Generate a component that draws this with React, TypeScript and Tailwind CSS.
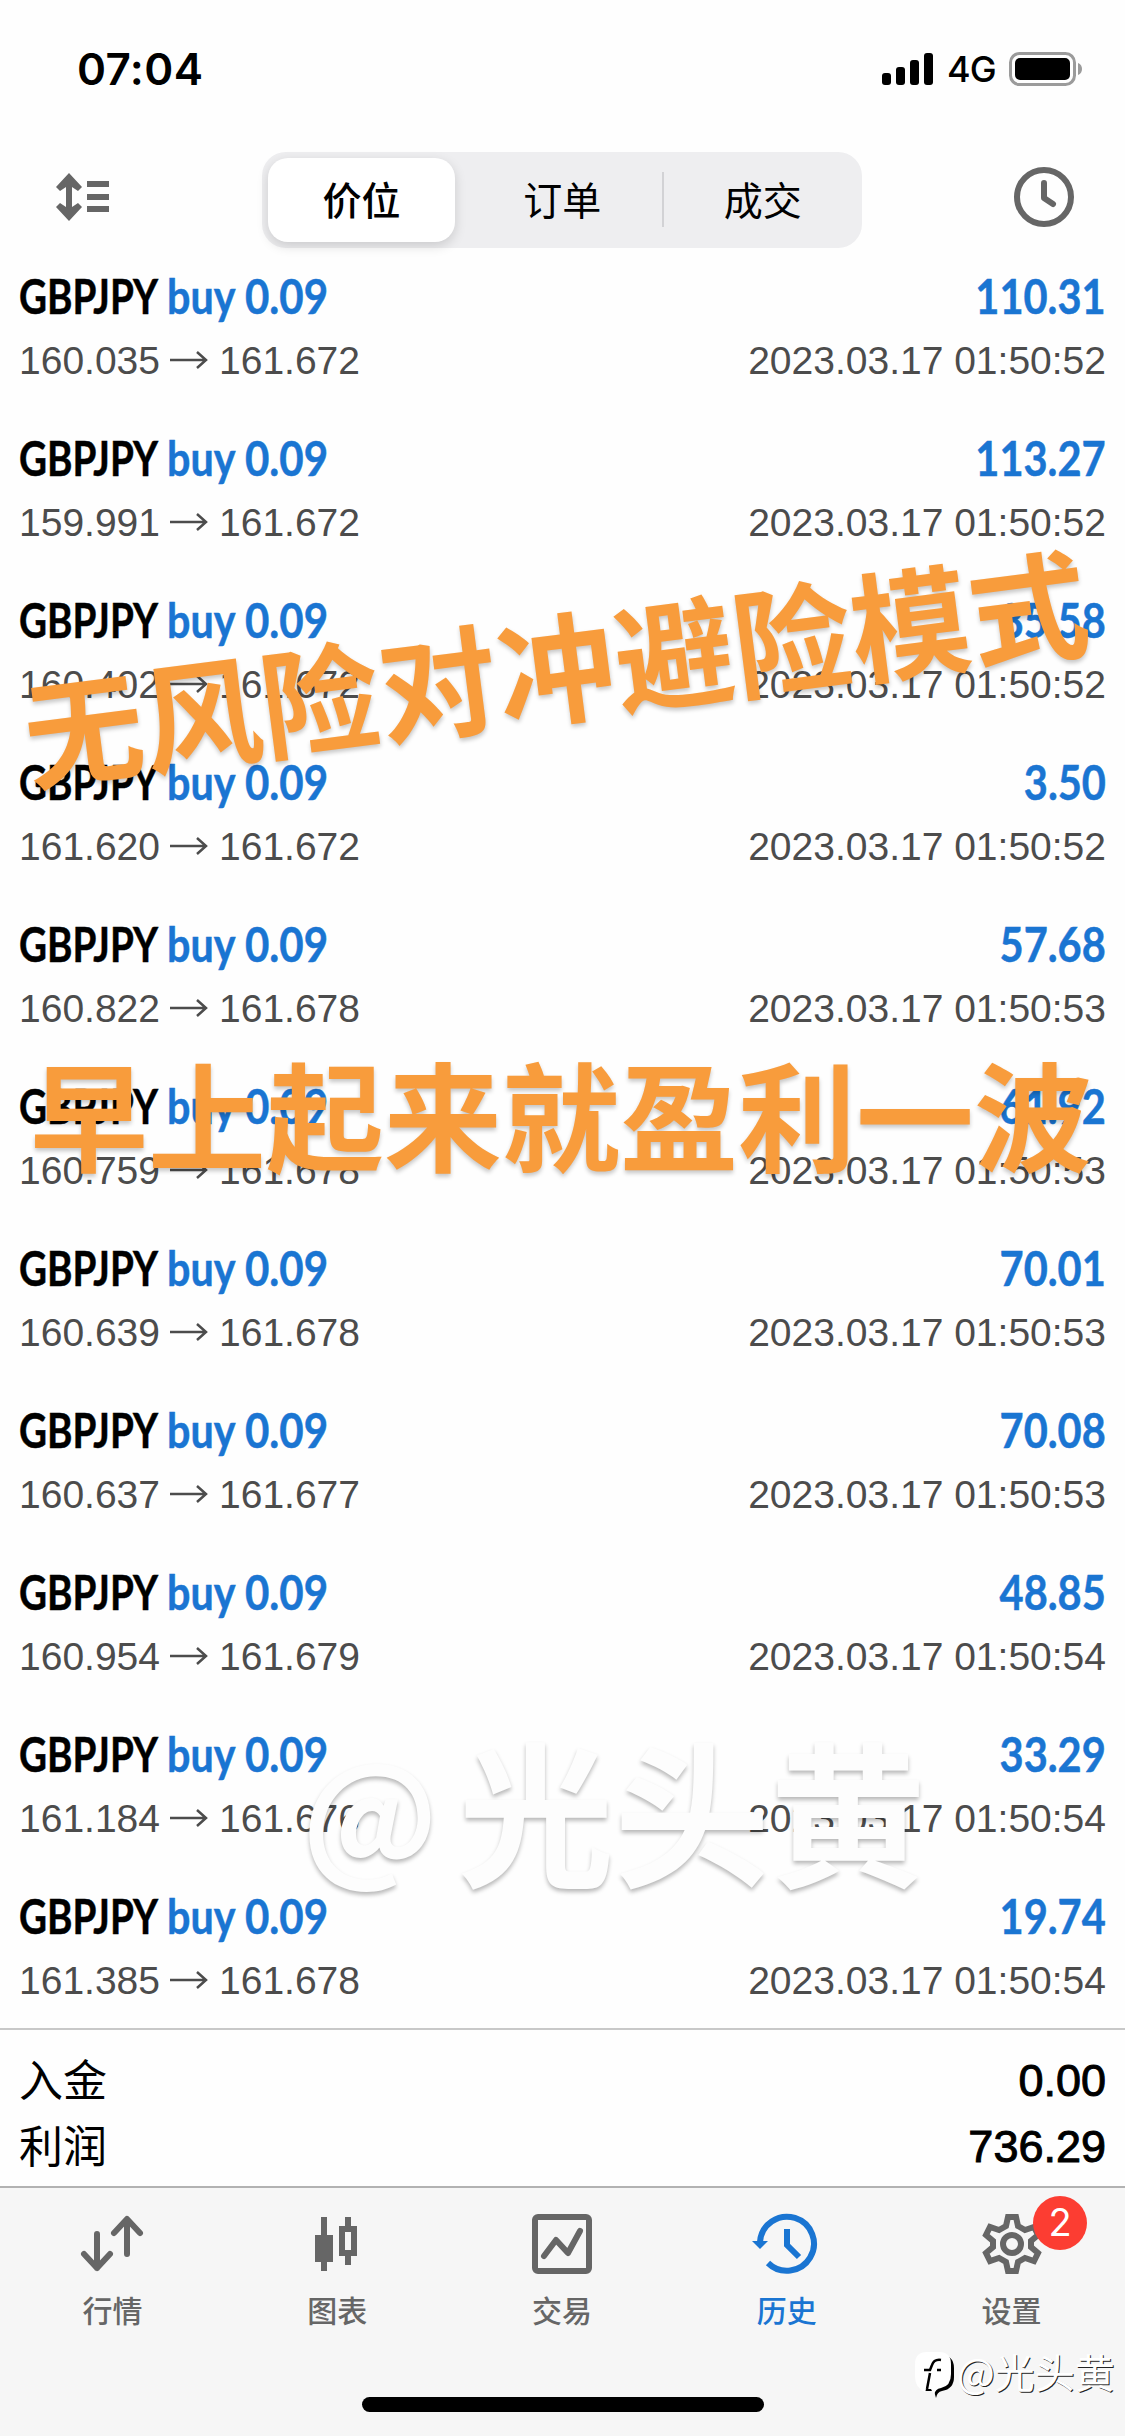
import type { ReactNode } from 'react';

const deals = [
  { from: '160.035', to: '161.672', profit: '110.31', time: '2023.03.17 01:50:52' },
  { from: '159.991', to: '161.672', profit: '113.27', time: '2023.03.17 01:50:52' },
  { from: '160.402', to: '161.672', profit: '85.58', time: '2023.03.17 01:50:52' },
  { from: '161.620', to: '161.672', profit: '3.50', time: '2023.03.17 01:50:52' },
  { from: '160.822', to: '161.678', profit: '57.68', time: '2023.03.17 01:50:53' },
  { from: '160.759', to: '161.678', profit: '61.92', time: '2023.03.17 01:50:53' },
  { from: '160.639', to: '161.678', profit: '70.01', time: '2023.03.17 01:50:53' },
  { from: '160.637', to: '161.677', profit: '70.08', time: '2023.03.17 01:50:53' },
  { from: '160.954', to: '161.679', profit: '48.85', time: '2023.03.17 01:50:54' },
  { from: '161.184', to: '161.676', profit: '33.29', time: '2023.03.17 01:50:54' },
  { from: '161.385', to: '161.678', profit: '19.74', time: '2023.03.17 01:50:54' },
];

function StatusBar() {
  return (
    <div className="flex h-[138px] items-center justify-between pl-[77px] pr-[42px]">
      <span className="font-[Inter,sans-serif] text-[44px] font-semibold leading-none tracking-[0.4px]">07:04</span>
      <div className="flex items-center">
        <svg width="52" height="34" viewBox="0 0 52 34">
          <rect x="0" y="21" width="9" height="12" rx="3" />
          <rect x="14" y="15" width="9" height="18" rx="3" />
          <rect x="28" y="8" width="9" height="25" rx="3" />
          <rect x="42" y="1" width="9" height="32" rx="3" />
        </svg>
        <span className="ml-[13px] w-[62px] font-[Inter,sans-serif] text-[36px] font-medium leading-none tracking-[-1px]">4G</span>
        <svg width="74" height="36" viewBox="0 0 74 36">
          <rect x="1.5" y="2.5" width="64" height="31" rx="9" fill="none" stroke="#9b9b9b" strokeWidth="3" />
          <rect x="6" y="7" width="55" height="22" rx="5" />
          <path d="M69 12c3 1 4 3.500 4 6s-1 5-4 6z" fill="#9b9b9b" />
        </svg>
      </div>
    </div>
  );
}

function Toolbar() {
  return (
    <div className="flex h-[123px] items-center justify-between pl-[54px] pr-[49px]">
      <svg width="56" height="50" viewBox="0 0 56 50" className="-mt-[5px]" stroke="#666" strokeWidth="6">
        <path d="M15 7v36" />
        <path d="M15 1 28 15l-4 4-9-6-9 6-4-4zM15 49 28 35l-4-4-9 6-9-6-4 4z" fill="#666" stroke="none" />
        <path d="M33 12h22M33 25h22M33 37h22" />
      </svg>
      <div className="ml-[2px] flex h-24 w-[600px] items-center rounded-[24px] bg-[#eeeef0] p-[6px] pr-0 font-['Noto_Sans_CJK_SC',sans-serif] text-[39px] leading-[54px]">
        <div className="mr-[8px] flex h-[84px] w-[187px] items-center justify-center rounded-[20px] bg-white pb-[4px] font-medium shadow-[0_4px_12px_rgba(0,0,0,0.15)]">
          价位
        </div>
        <div className="flex flex-1 justify-center pb-[4px]">订单</div>
        <div className="h-[55px] w-[2px] bg-[#d2d2d5]" />
        <div className="flex flex-1 justify-center pb-[4px]">成交</div>
      </div>
      <svg width="64" height="64" viewBox="0 0 64 64" className="-mt-[5px]" fill="none" stroke="#666" strokeWidth="6">
        <circle cx="32" cy="32" r="27" />
        <path d="M32 18v15l9 6" strokeLinecap="round" strokeLinejoin="round" />
      </svg>
    </div>
  );
}

function DealRow({ deal }: { deal: (typeof deals)[number] }) {
  return (
    <div className="h-[162px] px-[19px] pt-[9px]">
      <div className="flex h-[52px] items-center whitespace-nowrap font-[Lato,sans-serif] text-[48px] font-bold leading-none [-webkit-text-stroke:0.5px_currentColor]">
        <span className="w-[148px]">
          <span className="inline-block origin-left scale-x-[0.805]">GBPJPY</span>
        </span>
        <span className="w-[78px] text-[#1a75d2]">
          <span className="inline-block origin-left scale-x-[0.86]">buy</span>
        </span>
        <span className="text-[#1a75d2]">
          <span className="inline-block origin-left scale-x-[0.875]">0.09</span>
        </span>
        <span className="ml-auto text-[#1a75d2]">
          <span className="inline-block origin-right scale-x-[0.865]">{deal.profit}</span>
        </span>
      </div>
      <div className="mt-[13px] flex h-[50px] items-center whitespace-nowrap font-['Liberation_Sans',sans-serif] text-[39px] leading-none text-[#4c4c4c]">
        <span className="w-[141px]">{deal.from}</span>
        <svg width="40" height="20" viewBox="0 0 40 20" className="ml-[9px] mr-[10px]" fill="none" stroke="#4c4c4c" strokeWidth="2.500">
          <path d="M1 10h36M28 2l9 8-9 8" />
        </svg>
        <span>{deal.to}</span>
        <span className="ml-auto">{deal.time}</span>
      </div>
    </div>
  );
}

function SummaryRow({ label, value }: { label: string; value: string }) {
  return (
    <div className="flex h-[66px] items-center justify-between">
      <span className="pb-[5px] font-['Noto_Sans_CJK_SC',sans-serif] text-[44px] leading-none">{label}</span>
      <span className="font-['Liberation_Sans',sans-serif] text-[45px] leading-none [-webkit-text-stroke:1px_black]">{value}</span>
    </div>
  );
}

function Tab({ label, active, children }: { label: string; active?: boolean; children: ReactNode }) {
  return (
    <div className={active ? 'flex flex-col items-center text-[#1a75d2]' : 'flex flex-col items-center text-[#666]'}>
      <svg width="80" height="68" viewBox="-40 -34 80 68" fill="none" stroke="currentColor" strokeWidth="6">
        {children}
      </svg>
      <span className="mt-[11px] font-['Noto_Sans_CJK_SC',sans-serif] text-[30px] font-medium leading-[40px]">{label}</span>
    </div>
  );
}

function TabBar() {
  return (
    <div className="h-[250px] border-t-2 border-[#b2b2b2] bg-[#f6f6f6]">
      <div className="grid w-[1124px] grid-cols-5 pt-[22px]">
        <Tab label="行情">
          <path d="M-15-10v34M-28 10l13 14L-2 10M15 10v-34M2-11l13-14 13 14" strokeLinecap="round" strokeLinejoin="round" />
        </Tab>
        <Tab label="图表">
          <g fill="currentColor" stroke="none">
            <path d="M-16-27h6v54h-6zM-22-9h18v27h-18z" />
            <path d="M8-27h6v9h-6zM8 12h6v9h-6zM2-18h18v30H2zM8-12v18h6v-18z" fillRule="evenodd" />
          </g>
        </Tab>
        <Tab label="交易">
          <rect x="-27" y="-27" width="54" height="54" rx="3" />
          <path d="M-18 12-6-4 6 9 18-13" strokeLinecap="round" strokeLinejoin="round" />
        </Tab>
        <Tab label="历史" active>
          <path d="M-27-2A27 27 0 1 1-19 19" />
          <path d="M0-15v16l12 12" />
          <path d="M-35-3h16l-8 8z" fill="currentColor" stroke="none" />
        </Tab>
        <Tab label="设置">
          <circle r="9" />
          <path d="M-4-27H4L6-18 13-14 22-17 26-9 19-3V3L26 9 22 17 13 14 6 18 4 27H-4L-6 18-13 14-22 17-26 9-19 3V-3L-26-9-22-17-13-14-6-18Z" />
        </Tab>
      </div>
    </div>
  );
}

export default function App() {
  return (
    <main className="relative flex h-[2436px] w-[1125px] flex-col overflow-hidden bg-[#fefefe] text-black">
      <StatusBar />
      <Toolbar />
      <div className="h-[1767px]">
        {deals.map((deal, i) => (
          <DealRow key={i} deal={deal} />
        ))}
      </div>
      <div className="h-[158px] border-t-2 border-[#c8c8c8] px-[19px] pt-[17px]">
        <SummaryRow label="入金" value="0.00" />
        <SummaryRow label="利润" value="736.29" />
      </div>
      <TabBar />

      {/* Notification badge */}
      <div className="absolute left-[1033px] top-[2196px] flex size-[54px] items-center justify-center rounded-full bg-[#fc3d32] pb-[2px] font-[Inter,sans-serif] text-[38px] leading-none text-white">
        2
      </div>

      {/* Home indicator */}
      <div className="absolute left-[362px] top-[2397px] h-[15px] w-[402px] rounded-full bg-black" />

      {/* Captions */}
      <div className="absolute left-[-45px] top-[603px] flex h-[120px] w-[1200px] rotate-[-7.3deg] items-center justify-center whitespace-nowrap font-['Noto_Sans_CJK_SC',sans-serif] text-[119px] font-bold leading-none text-[#f89c3c] [text-shadow:0_3px_4px_rgba(0,0,0,0.22)]">
        无风险对冲避险模式
      </div>
      <div className="absolute left-[-39px] top-[1052px] flex h-[120px] w-[1200px] items-center justify-center whitespace-nowrap font-['Noto_Sans_CJK_SC',sans-serif] text-[118px] font-bold leading-none text-[#f89c3c] [text-shadow:0_3px_4px_rgba(0,0,0,0.22)]">
        早上起来就盈利一波
      </div>

      {/* Watermarks */}
      <div className="absolute left-[302px] top-[1729px] flex items-center whitespace-nowrap font-['Noto_Sans_CJK_SC',sans-serif] text-[156px] font-bold leading-none text-[#fdfdfd] [text-shadow:0_3px_4px_rgba(0,0,0,0.28)]">
        <span className="w-[156px] text-[135px]">@</span>
        <span>光头黄</span>
      </div>
      <div className="absolute left-[913px] top-[2346px] flex items-center">
        <svg width="44" height="54" viewBox="0 0 44 54">
          <path d="M15 9h12q14 0 14 13v9q0 12-12 14-5 1-6 7l-2-7h-8Q4 42 4 31V22Q4 9 15 9" fill="#000" />
          <path d="M14 6h12q12 0 12 12v10q0 12-10 14-6 1-7 7l-3-6h-5l-1 3Q2 42 2 30V18Q2 6 14 6" fill="#fff" />
          <path d="M14 43l3-16M11 24h6l2-5q2-6 9-5M24 24h4" fill="none" stroke="#000" strokeWidth="2.500" />
        </svg>
        <span className="mb-[5px] font-['Noto_Sans_CJK_SC',sans-serif] text-[40px] leading-[48px] text-white [text-shadow:1px_1px_0_#222]">@光头黄</span>
      </div>
    </main>
  );
}
